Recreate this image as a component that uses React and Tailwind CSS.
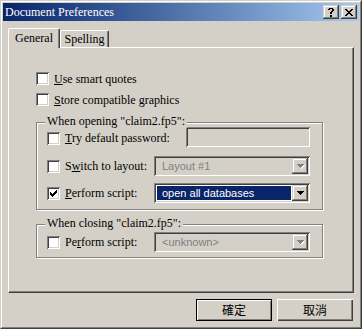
import React from "react";

function pixPath(rows) {
  let d = "";
  rows.forEach((r, y) => {
    for (let x = 0; x < r.length; x++) if (r[x] === "#") d += `M${x} ${y}h1v1h-1z`;
  });
  return d;
}

const CHECK = pixPath([
  "......#",
  ".....##",
  "#...###",
  "##.###.",
  "#####..",
  ".###...",
  "..#....",
]);

const CLOSE = pixPath([
  "##....##",
  ".##..##.",
  "..####..",
  "...##...",
  "..####..",
  ".##..##.",
  "##....##",
]);

const QMARK = pixPath([
  ".####.",
  "##..##",
  "....##",
  "...##.",
  "..##..",
  "..##..",
  "......",
  "..##..",
  "..##..",
]);

const ARROW = "M0 0h7v1h-1v1h-1v1h-1v1h-1v-1h-1v-1h-1v-1h-1z";

const SUNKEN =
  "shadow-[inset_1px_1px_#808080,inset_-1px_-1px_#ffffff,inset_2px_2px_#404040,inset_-2px_-2px_#d4d0c8]";
const RAISED =
  "shadow-[inset_-1px_-1px_#404040,inset_1px_1px_#d4d0c8,inset_-2px_-2px_#808080,inset_2px_2px_#ffffff]";

function Check({ checked }) {
  return (
    <div className={`relative w-[13px] h-[13px] shrink-0 bg-white ${SUNKEN}`}>
      {checked && (
        <svg
          className="absolute left-[3px] top-[3px]"
          width="7"
          height="7"
          viewBox="0 0 7 7"
          shapeRendering="crispEdges"
        >
          <path d={CHECK} fill="#000" />
        </svg>
      )}
    </div>
  );
}

function Arrow({ disabled }) {
  return (
    <svg width="8" height="5" viewBox="0 0 8 5" shapeRendering="crispEdges">
      {disabled ? (
        <>
          <path d={ARROW} fill="#ffffff" transform="translate(1 1)" />
          <path d={ARROW} fill="#808080" />
        </>
      ) : (
        <path d={ARROW} fill="#000000" />
      )}
    </svg>
  );
}

function Combo({ text, disabled, selected }) {
  return (
    <div className={`w-[156px] h-[20px] p-[2px] flex bg-[#d4d0c8] ${SUNKEN}`}>
      {selected ? (
        <div className="flex-1 bg-white p-px flex">
          <div className="flex-1 bg-[#0a246a] text-white flex items-center pl-[5px] font-['Liberation_Sans',sans-serif] text-[11px] leading-none">
            {text}
          </div>
        </div>
      ) : (
        <div className="flex-1 flex items-center pl-[6px] font-['Liberation_Sans',sans-serif] text-[11px] leading-none text-[#808080]">
          {text}
        </div>
      )}
      <div className={`w-[16px] h-full flex items-center justify-center pl-px pt-px bg-[#d4d0c8] ${RAISED}`}>
        <Arrow disabled={disabled} />
      </div>
    </div>
  );
}

function Group({ label, className = "", children }) {
  return (
    <div
      className={`relative w-[287px] border border-[#808080] shadow-[inset_1px_1px_#ffffff,1px_1px_#ffffff] ${className}`}
    >
      <span className="absolute left-[8px] top-[-9px] px-[2px] bg-[#d4d0c8] leading-[14px] whitespace-nowrap">
        {label}
      </span>
      {children}
    </div>
  );
}

function Row({ checked, label, children, className = "" }) {
  return (
    <div className={`h-[20px] flex items-center ${className}`}>
      <div className="w-[107px] flex items-center">
        <Check checked={checked} />
        <span className="ml-[5px] leading-[14px] whitespace-nowrap">{label}</span>
      </div>
      {children}
    </div>
  );
}

export default function App() {
  return (
    <div className="w-[362px] h-[329px] bg-[#d4d0c8] border border-t-[#d4d0c8] border-l-[#d4d0c8] border-r-[#404040] border-b-[#404040] font-['Liberation_Serif',serif] text-[12px] text-black">
      <div className="h-full border border-t-white border-l-white border-r-[#808080] border-b-[#808080] p-px flex flex-col">
        {/* Title bar */}
        <div className="h-[18px] shrink-0 flex items-center justify-between pl-[2px] pr-[2px] bg-linear-to-r from-[#0a246a] to-[#a6caf0]">
          <span className="text-white leading-[14px] whitespace-nowrap">Document Preferences</span>
          <div className="flex gap-[2px]">
            <div className={`w-[16px] h-[14px] bg-[#d4d0c8] flex items-center justify-center ${RAISED}`}>
              <svg width="6" height="9" viewBox="0 0 6 9" shapeRendering="crispEdges">
                <path d={QMARK} fill="#000" />
              </svg>
            </div>
            <div className={`w-[16px] h-[14px] bg-[#d4d0c8] flex items-center justify-center ${RAISED}`}>
              <svg width="8" height="7" viewBox="0 0 8 7" shapeRendering="crispEdges">
                <path d={CLOSE} fill="#000" />
              </svg>
            </div>
          </div>
        </div>

        {/* Body */}
        <div className="flex-1 flex flex-col px-[5px] pt-[7px]">
          {/* Tabs */}
          <div className="h-[19px] flex items-end">
            <div className="relative z-10 -mb-px w-[52px] h-[20px] bg-[#d4d0c8] border-t border-l border-t-white border-l-white border-r border-r-[#404040] shadow-[inset_-1px_0_#808080] rounded-tl-[2px] rounded-tr-[2px] flex justify-center pt-[2px]">
              <span className="leading-[14px]">General</span>
            </div>
            <div className="w-[49px] h-[17px] bg-[#d4d0c8] border-t border-l border-t-white border-l-white border-r border-r-[#404040] shadow-[inset_-1px_0_#808080] rounded-tl-[2px] rounded-tr-[2px] flex justify-center pt-[1px]">
              <span className="leading-[14px]">Spelling</span>
            </div>
          </div>

          {/* Panel */}
          <div className="h-[246px] border-t border-l border-t-white border-l-white border-r border-b border-r-[#404040] border-b-[#404040] shadow-[inset_-1px_-1px_#808080] pl-[27px] pt-[24px] flex flex-col">
            <div className="h-[13px] flex items-center">
              <Check />
              <span className="ml-[5px] leading-[14px]">
                <span className="underline">U</span>se smart quotes
              </span>
            </div>
            <div className="h-[13px] mt-[8px] flex items-center">
              <Check />
              <span className="ml-[5px] leading-[14px]">
                <span className="underline">S</span>tore compatible graphics
              </span>
            </div>

            <Group label={'When opening "claim2.fp5":'} className="mt-[16px] h-[88px] pl-[10px] pt-[5px]">
              <Row
                label={
                  <>
                    <span className="underline">T</span>ry default password:
                  </>
                }
              >
                <div className={`ml-[32px] w-[124px] h-[20px] -mt-[2px] bg-[#d4d0c8] ${SUNKEN}`} />
              </Row>
              <Row
                className="mt-[8px]"
                label={
                  <>
                    S<span className="underline">w</span>itch to layout:
                  </>
                }
              >
                <Combo text="Layout #1" disabled />
              </Row>
              <Row
                className="mt-[7px]"
                checked
                label={
                  <>
                    <span className="underline">P</span>erform script:
                  </>
                }
              >
                <Combo text="open all databases" selected />
              </Row>
            </Group>

            <Group label={'When closing "claim2.fp5":'} className="mt-[14px] h-[34px] pl-[10px] pt-[7px]">
              <Row
                label={
                  <>
                    Pe<span className="underline">r</span>form script:
                  </>
                }
              >
                <Combo text="<unknown>" disabled />
              </Row>
            </Group>
          </div>

          {/* Buttons */}
          <div className="mt-[6px] flex justify-end gap-[5px] pr-px font-['Noto_Sans_CJK_TC',sans-serif]">
            <div className="w-[76px] h-[22px] border border-black bg-[#d4d0c8] shadow-[inset_1px_1px_#ffffff,inset_-1px_-1px_#808080] flex items-center justify-center text-[12px] leading-none">
              確定
            </div>
            <div className="w-[76px] h-[22px] bg-[#d4d0c8] shadow-[inset_1px_1px_#ffffff,inset_-1px_-1px_#404040,inset_-2px_-2px_#808080] flex items-center justify-center text-[12px] leading-none">
              取消
            </div>
          </div>
        </div>
      </div>
    </div>
  );
}
